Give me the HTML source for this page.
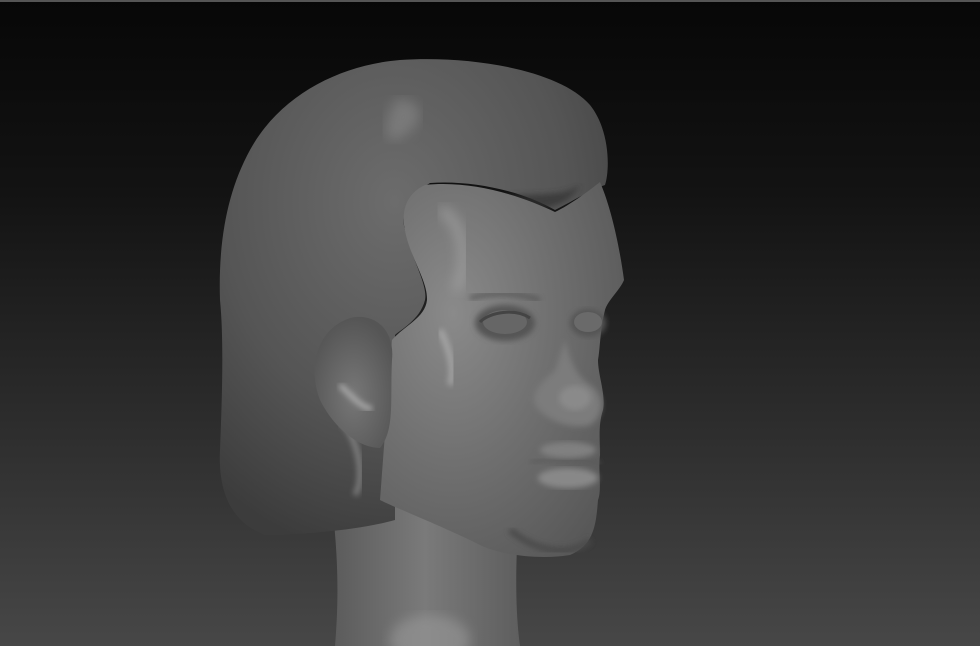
<!DOCTYPE html>
<html><head><style>
html,body{margin:0;padding:0;width:980px;height:646px;overflow:hidden;background:#222}
svg{display:block}
</style></head><body>
<svg width="980" height="646" viewBox="0 0 980 646" xmlns="http://www.w3.org/2000/svg">
<defs>
<linearGradient id="bg" x1="0" y1="0" x2="0" y2="1">
<stop offset="0" stop-color="#070707"/><stop offset="0.3" stop-color="#131313"/><stop offset="0.7" stop-color="#303030"/><stop offset="1" stop-color="#474747"/>
</linearGradient>
<radialGradient id="hair" cx="0.45" cy="0.3" r="0.75">
<stop offset="0" stop-color="#6c6c6c"/><stop offset="0.6" stop-color="#555"/><stop offset="1" stop-color="#3c3c3c"/>
</radialGradient>
<radialGradient id="face" cx="0.3" cy="0.35" r="0.8">
<stop offset="0" stop-color="#8a8a8a"/><stop offset="0.5" stop-color="#707070"/><stop offset="1" stop-color="#585858"/>
</radialGradient>
<linearGradient id="neck" x1="0" y1="0" x2="1" y2="0">
<stop offset="0" stop-color="#5a5a5a"/><stop offset="0.5" stop-color="#7a7a7a"/><stop offset="1" stop-color="#5e5e5e"/>
</linearGradient>
<radialGradient id="ear" cx="0.5" cy="0.6" r="0.6">
<stop offset="0" stop-color="#777"/><stop offset="1" stop-color="#555"/>
</radialGradient>
<filter id="bl"><feGaussianBlur stdDeviation="6"/></filter>
<filter id="bl2"><feGaussianBlur stdDeviation="3"/></filter>
</defs>
<rect width="980" height="646" fill="url(#bg)"/>
<rect width="980" height="2" fill="#555"/>
<path d="M330 490 C340 560 338 610 335 646 L520 646 C515 610 515 560 520 500 Z" fill="url(#neck)"/>
<ellipse cx="430" cy="640" rx="40" ry="25" fill="#999" filter="url(#bl)" opacity="0.6"/>
<path d="M400 60 C470 55 560 70 590 105 C610 130 610 170 605 185 C590 190 575 200 555 210 C520 190 470 180 430 183 C410 195 400 215 405 230 C412 260 428 285 425 300 C420 320 400 330 395 335 L395 520 C360 530 300 535 265 535 C230 522 218 490 220 450 C222 400 224 340 220 300 C218 240 228 190 250 150 C280 95 340 65 400 60 Z" fill="url(#hair)"/>
<path d="M395 100 C420 95 430 120 405 135 C385 150 380 130 395 100 Z" fill="#888" filter="url(#bl)" opacity="0.6"/>
<path d="M480 200 C520 190 560 200 580 185 C570 205 540 220 480 200 Z" fill="#333" filter="url(#bl2)" opacity="0.7"/>
<path d="M340 420 C360 440 365 480 355 495" stroke="#999" stroke-width="5" fill="none" filter="url(#bl2)" opacity="0.7"/>
<path d="M425 185 C470 180 520 195 555 212 C570 205 590 190 600 182 C612 210 620 250 624 280 C620 290 608 300 605 310 C600 330 600 350 598 360 C598 375 606 395 603 410 C598 425 600 440 600 455 C598 470 602 490 598 500 C596 525 594 545 570 555 C540 560 500 555 480 545 C440 525 400 510 380 500 L392 340 C405 325 425 318 427 300 C428 280 408 255 404 225 C402 205 410 192 425 185 Z" fill="url(#face)"/>
<path d="M440 210 C465 220 470 270 455 290" stroke="#aaa" stroke-width="10" fill="none" filter="url(#bl)" opacity="0.6"/>
<path d="M440 330 C450 350 455 370 450 385" stroke="#bbb" stroke-width="6" fill="none" filter="url(#bl2)" opacity="0.6"/>
<path d="M350 318 C375 312 395 330 392 360 C390 400 395 430 380 448 C360 448 335 430 320 400 C308 370 315 330 350 318 Z" fill="url(#ear)"/>
<path d="M340 385 C355 400 365 410 372 408" stroke="#aaa" stroke-width="5" fill="none" filter="url(#bl2)"/>
<ellipse cx="505" cy="323" rx="30" ry="18" fill="#555" filter="url(#bl2)"/>
<ellipse cx="505" cy="322" rx="22" ry="12" fill="#666"/>
<path d="M480 322 C490 312 515 308 530 318" stroke="#444" stroke-width="3" fill="none"/>
<ellipse cx="588" cy="323" rx="18" ry="14" fill="#555" filter="url(#bl2)"/>
<ellipse cx="588" cy="322" rx="14" ry="10" fill="#6a6a6a"/>
<path d="M470 298 C500 290 525 295 540 300" stroke="#555" stroke-width="4" fill="none" filter="url(#bl2)"/>
<path d="M565 340 C570 360 575 375 590 385 C605 395 605 415 590 425 C570 430 545 420 535 405 C530 390 545 380 555 370" fill="#7c7c7c" filter="url(#bl2)"/>
<ellipse cx="575" cy="398" rx="16" ry="12" fill="#8a8a8a" filter="url(#bl2)"/>
<path d="M530 462 C555 458 580 458 600 464" stroke="#5a5a5a" stroke-width="3" fill="none" filter="url(#bl2)"/>
<ellipse cx="568" cy="478" rx="30" ry="10" fill="#888" filter="url(#bl2)"/>
<ellipse cx="568" cy="450" rx="28" ry="8" fill="#808080" filter="url(#bl2)"/>
<path d="M510 530 C540 555 575 555 590 540" stroke="#4a4a4a" stroke-width="6" fill="none" filter="url(#bl2)"/>
</svg>
</body></html>
